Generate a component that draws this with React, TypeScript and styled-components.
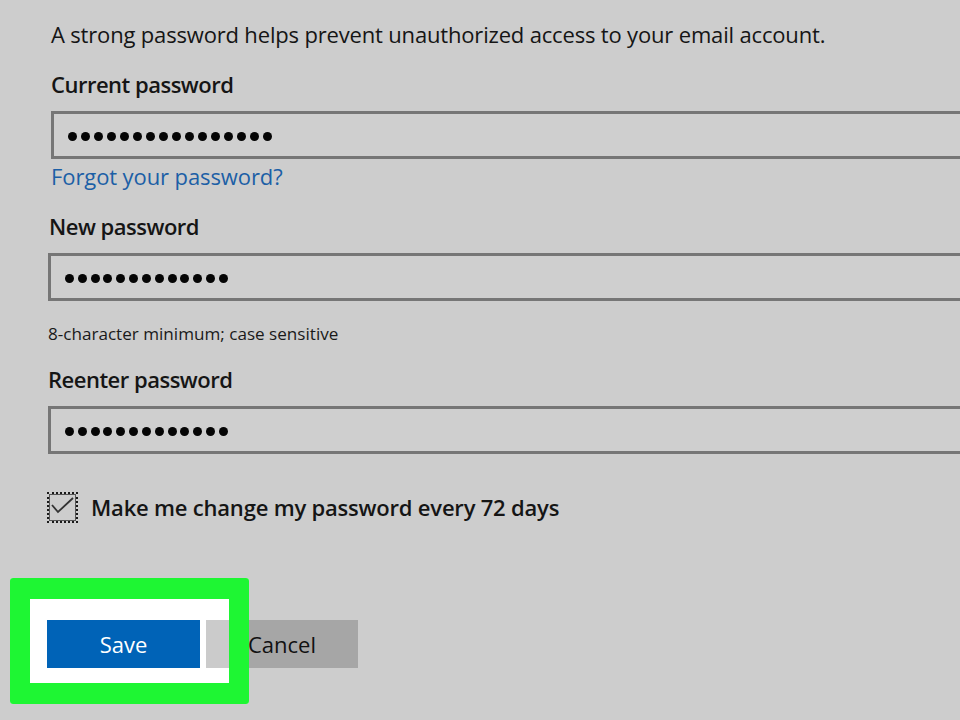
import React from "react";
import styled, { createGlobalStyle } from "styled-components";

const Global = createGlobalStyle`
  html, body {
    margin: 0;
    padding: 0;
    background: #cdcdcd;
    overflow: hidden;
  }
  body {
    font-family: "Open Sans", "Noto Sans", sans-serif;
    color: #151515;
  }
`;

const Page = styled.div`
  width: 960px;
  height: 720px;
  box-sizing: border-box;
  padding: 20px 0 0 48px;
  display: flex;
  flex-direction: column;
  overflow: hidden;
`;

const Group = styled.div<{ $nudge?: number }>`
  display: flex;
  flex-direction: column;
  padding-left: ${(p) => p.$nudge ?? 0}px;
`;

const Intro = styled.p`
  margin: 0;
  font-size: 22px;
  line-height: 29px;
  font-weight: 400;
  letter-spacing: -0.17px;
`;

const Label = styled.div<{ $top: number }>`
  margin-top: ${(p) => p.$top}px;
  font-size: 22px;
  line-height: 29px;
  font-weight: 600;
  letter-spacing: -0.5px;
`;

const InputBox = styled.div<{ $top: number }>`
  margin-top: ${(p) => p.$top}px;
  width: 1000px;
  height: 48px;
  box-sizing: border-box;
  border: 3px solid #767676;
  background: #cfcfcf;
  display: flex;
  align-items: center;
  padding: 3px 0 0 14px;
  gap: 4px;
`;

const Dot = styled.span<{ $gap: number }>`
  width: 9px;
  height: 9px;
  margin-right: ${(p) => p.$gap - 4}px;
  border-radius: 50%;
  background: #050505;
  flex: none;
`;

const Link = styled.a`
  margin-top: 3px;
  font-size: 22px;
  line-height: 29px;
  color: #1c5fa6;
  text-decoration: none;
  letter-spacing: -0.1px;
  align-self: flex-start;
`;

const Hint = styled.div`
  margin-top: 21px;
  font-size: 17.1px;
  line-height: 24px;
  color: #1a1a1a;
`;

const CheckRow = styled.label`
  margin-top: 38px;
  margin-left: -1px;
  display: flex;
  align-items: center;
  gap: 13px;
  font-size: 22px;
  line-height: 29px;
  font-weight: 600;
  letter-spacing: -0.2px;
`;

const CheckBox = styled.span`
  width: 31px;
  height: 31px;
  box-sizing: border-box;
  border: 2px dotted #1a1a1a;
  box-shadow: inset 0 0 0 1px #555;
  display: flex;
  flex: none;
`;

const ButtonRow = styled.div`
  margin-top: 97px;
  margin-left: -1px;
  position: relative;
  isolation: isolate;
  display: flex;
  gap: 6px;
`;

const Button = styled.button<{ $primary?: boolean }>`
  position: relative;
  z-index: ${(p) => (p.$primary ? 2 : 1)};
  width: ${(p) => (p.$primary ? 153 : 152)}px;
  height: 48px;
  border: none;
  padding: 0;
  font-family: "Open Sans", "Noto Sans", sans-serif;
  font-size: 22px;
  color: ${(p) => (p.$primary ? "#ffffff" : "#111111")};
  background: ${(p) =>
    p.$primary
      ? "#0063b7"
      : "linear-gradient(90deg, #cbcbcb 0 23px, #a6a6a6 23px)"};
`;

const Highlight = styled.div`
  position: absolute;
  left: -37px;
  top: -42px;
  width: 239px;
  height: 126px;
  pointer-events: none;
  &::before {
    content: "";
    position: absolute;
    inset: 0;
    background: #ffffff;
    border-radius: 3px;
    z-index: 0;
  }
  &::after {
    content: "";
    position: absolute;
    inset: 0;
    border-style: solid;
    border-color: #1ef633;
    border-width: 21px 20px 21px 20px;
    border-radius: 3px;
    z-index: 3;
  }
`;

const Dots: React.FC<{ n: number; gap?: number }> = ({ n, gap = 4 }) => (
  <>
    {Array.from({ length: n }, (_, i) => (
      <Dot key={i} $gap={gap} />
    ))}
  </>
);

export default function App() {
  return (
    <>
      <Global />
      <Page>
        <Group $nudge={3}>
          <Intro>A strong password helps prevent unauthorized access to your email account.</Intro>
          <Label $top={21}>Current password</Label>
          <InputBox $top={12}>
            <Dots n={16} />
          </InputBox>
          <Link href="#">Forgot your password?</Link>
        </Group>
        <Group $nudge={1}>
          <Label $top={21}>New password</Label>
        </Group>
        <InputBox $top={12}>
          <Dots n={13} gap={3.8} />
        </InputBox>
        <Hint>8-character minimum; case sensitive</Hint>
        <Label $top={19}>Reenter password</Label>
        <InputBox $top={12}>
          <Dots n={13} gap={3.8} />
        </InputBox>
        <CheckRow>
          <CheckBox>
            <svg width="27" height="27" viewBox="0 0 27 27">
              <path d="M3 11 L9 18 L24 4" fill="none" stroke="#333" strokeWidth="1.8" />
            </svg>
          </CheckBox>
          Make me change my password every 72 days
        </CheckRow>
        <ButtonRow>
          <Highlight />
          <Button $primary>Save</Button>
          <Button>Cancel</Button>
        </ButtonRow>
      </Page>
    </>
  );
}
